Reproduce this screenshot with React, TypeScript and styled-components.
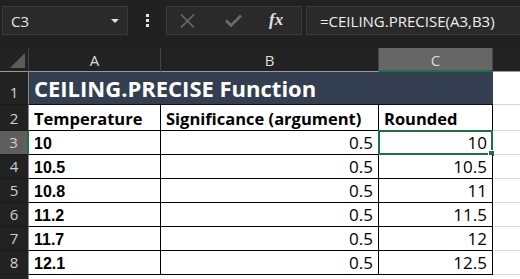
import styled, { createGlobalStyle } from 'styled-components';

const GlobalStyle = createGlobalStyle`
  body {
    margin: 0;
    background: #212121;
  }
`;

const Page = styled.div`
  width: 520px;
  height: 279px;
  overflow: hidden;
  background: #212121;
  font-family: 'Open Sans', 'Liberation Sans', sans-serif;
`;

const TopBar = styled.div`
  display: flex;
  align-items: flex-start;
  height: 48px;
  padding: 6px 0 0 2px;
  box-sizing: border-box;
`;

const NameBox = styled.div`
  width: 126px;
  height: 29px;
  box-sizing: border-box;
  border: 1px solid #3a3a3a;
  background: #2a2a2a;
  display: flex;
  align-items: center;
  justify-content: space-between;
  padding: 0 8px 0 8px;
  color: #e6e6e6;
  font-size: 15px;
`;

const Caret = styled.span`
  width: 0;
  height: 0;
  border-left: 4px solid transparent;
  border-right: 4px solid transparent;
  border-top: 4px solid #e0e0e0;
`;

const Dots = styled.div`
  width: 38px;
  height: 29px;
  display: flex;
  flex-direction: column;
  align-items: center;
  justify-content: center;
  gap: 2px;
  span {
    width: 3px;
    height: 3px;
    background: #e6e6e6;
  }
`;

const ActionBox = styled.div`
  width: 136px;
  height: 29px;
  box-sizing: border-box;
  border: 1px solid #3a3a3a;
  background: #2a2a2a;
  display: flex;
  align-items: center;
  padding-left: 13px;
  gap: 30px;
`;

const Fx = styled.span`
  font-family: 'Liberation Serif', serif;
  font-style: italic;
  font-weight: 700;
  font-size: 17px;
  color: #e0e0e0;
  margin-left: -3px;
  margin-top: -2px;
`;

const FormulaBox = styled.div`
  flex: 1;
  height: 29px;
  margin-left: 4px;
  box-sizing: border-box;
  border: 1px solid #3a3a3a;
  border-right: none;
  background: #2a2a2a;
  color: #f0f0f0;
  font-size: 15px;
  display: flex;
  align-items: center;
  padding-left: 13px;
`;

const Sheet = styled.div`
  display: grid;
  grid-template-columns: 29px 132px 218px 114px 27px;
  grid-template-rows: 24px 33px 26px repeat(6, 24px) 10px;
`;

const ColHead = styled.div<{ $active?: boolean; $last?: boolean }>`
  box-sizing: border-box;
  background: ${(p) => (p.$active ? '#666666' : '#222222')};
  border-right: ${(p) => (p.$last ? 'none' : '1px solid #444')};
  border-bottom: ${(p) => (p.$active ? '2px solid #1e7145' : '1px solid #9a9a9a')};
  color: #dedede;
  font-size: 15px;
  display: flex;
  align-items: center;
  justify-content: center;
  padding-top: 1px;
`;

const Corner = styled.div`
  box-sizing: border-box;
  background: #222;
  border-right: 1px solid #444;
  border-bottom: 1px solid #9a9a9a;
  display: flex;
  align-items: flex-end;
  justify-content: flex-end;
  padding: 0 3px 3px 0;
`;

const Triangle = styled.div`
  width: 0;
  height: 0;
  border-left: 15px solid transparent;
  border-bottom: 15px solid #5c5c5c;
`;

const RowHead = styled.div<{ $active?: boolean }>`
  box-sizing: border-box;
  background: ${(p) => (p.$active ? '#5e5e5e' : '#222222')};
  border-right: ${(p) => (p.$active ? '2px solid #1e7145' : '1px solid #8a8a8a')};
  border-bottom: 1px solid #1a1a1a;
  color: #d0d0d0;
  font-size: 15px;
  display: flex;
  align-items: flex-end;
  justify-content: center;
  padding-bottom: 2px;
`;

const Title = styled.div`
  grid-column: 2 / span 3;
  box-sizing: border-box;
  background: #333f50;
  border-bottom: 1px solid #111;
  color: #ffffff;
  font-weight: 700;
  font-size: 22px;
  display: flex;
  align-items: flex-end;
  padding: 0 0 1px 5px;
  white-space: nowrap;
`;

const Cell = styled.div<{ $align?: 'left' | 'right'; $bold?: boolean; $arial?: boolean }>`
  position: relative;
  box-sizing: border-box;
  background: #fff;
  border-right: 1px solid #000;
  border-bottom: 1px solid #000;
  color: #000;
  font-family: ${(p) => (p.$arial ? "'Liberation Sans', Arial, sans-serif" : "'Open Sans', sans-serif")};
  font-weight: ${(p) => (p.$bold ? 700 : 400)};
  font-size: ${(p) => (p.$arial ? '16px' : p.$bold ? '16.5px' : '17px')};
  line-height: 1.2;
  display: flex;
  align-items: flex-end;
  justify-content: ${(p) => (p.$align === 'right' ? 'flex-end' : 'flex-start')};
  padding: 0 5px 1px 5px;
  white-space: nowrap;
`;

const Blank = styled.div`
  box-sizing: border-box;
  background: #fff;
  border-bottom: 1px solid #d4d4d4;
`;

const Selection = styled.div`
  position: absolute;
  inset: -1px -1px -1px -1px;
  border: 2px solid #1e7145;
  pointer-events: none;
  &::after {
    content: '';
    position: absolute;
    right: -4px;
    bottom: -4px;
    width: 5px;
    height: 5px;
    background: #1e7145;
    border: 1px solid #fff;
  }
`;

const rows = [
  { a: '10', c: '10' },
  { a: '10.5', c: '10.5' },
  { a: '10.8', c: '11' },
  { a: '11.2', c: '11.5' },
  { a: '11.7', c: '12' },
  { a: '12.1', c: '12.5' },
];

const App = () => {
  return (
    <Page>
      <GlobalStyle />
      <TopBar>
        <NameBox>
          C3
          <Caret />
        </NameBox>
        <Dots>
          <span />
          <span />
          <span />
        </Dots>
        <ActionBox>
          <svg width="15" height="14" viewBox="0 0 15 14">
            <path d="M1 0.5 L14 13.5 M14 0.5 L1 13.5" stroke="#6b6b6b" strokeWidth="1.6" />
          </svg>
          <svg width="17" height="13" viewBox="0 0 17 13">
            <path d="M1 6.5 L6 11.5 L16 1.5" stroke="#6b6b6b" strokeWidth="2.6" fill="none" />
          </svg>
          <Fx>fx</Fx>
        </ActionBox>
        <FormulaBox>=CEILING.PRECISE(A3,B3)</FormulaBox>
      </TopBar>
      <Sheet>
        <Corner>
          <Triangle />
        </Corner>
        <ColHead>A</ColHead>
        <ColHead>B</ColHead>
        <ColHead $active>C</ColHead>
        <ColHead $last />

        <RowHead>1</RowHead>
        <Title>CEILING.PRECISE Function</Title>
        <Blank />

        <RowHead>2</RowHead>
        <Cell $bold>Temperature</Cell>
        <Cell $bold>Significance (argument)</Cell>
        <Cell $bold>Rounded</Cell>
        <Blank />

        {rows.map((r, i) => (
          <>
            <RowHead key={`h${i}`} $active={i === 0}>
              {i + 3}
            </RowHead>
            <Cell key={`a${i}`} $bold $arial>
              {r.a}
            </Cell>
            <Cell key={`b${i}`} $align="right">
              0.5
            </Cell>
            <Cell key={`c${i}`} $align="right">
              {r.c}
              {i === 0 && <Selection />}
            </Cell>
            <Blank key={`d${i}`} />
          </>
        ))}

        <RowHead />
        <Blank />
        <Blank />
        <Blank />
        <Blank />
      </Sheet>
    </Page>
  );
};

export default App;
